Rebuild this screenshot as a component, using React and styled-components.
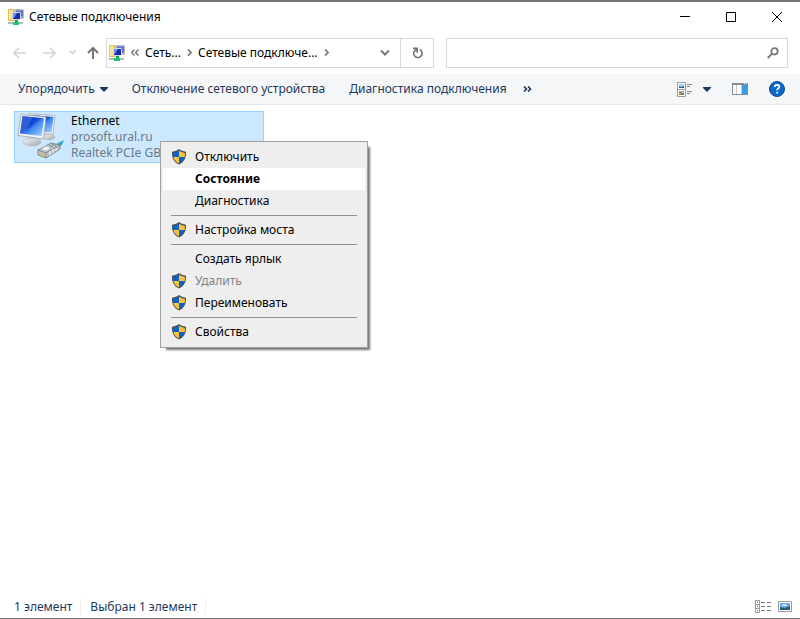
// src/App.jsx

import React, { useState } from 'react';
import styled, { createGlobalStyle } from 'styled-components';

const GlobalStyle = createGlobalStyle`
  * {
    box-sizing: border-box;
  }

  body {
    margin: 0;
    background: #fff;
    color: #000;
    font-family: 'Noto Sans', 'Open Sans', sans-serif;
    font-size: 12px;
    line-height: 16px;
  }

  button,
  input {
    font: inherit;
    color: inherit;
  }

  svg {
    display: block;
    flex: none;
  }
`;

const Window = styled.div`
  display: flex;
  flex-direction: column;
  min-height: 100vh;
  border-top: 2px solid #747474;
  border-bottom: 1px solid #747474;
`;

const PlainButton = styled.button`
  display: flex;
  align-items: center;
  justify-content: center;
  flex: none;
  padding: 0;
  border: none;
  background: none;
  white-space: nowrap;
`;

// Title bar
const TitleBar = styled.header`
  display: flex;
  align-items: center;
  height: 29px;
  padding-left: 8px;
`;

const Title = styled.h1`
  flex: 1;
  margin: 0 0 0 5px;
  font-size: 12px;
  font-weight: normal;
`;

const WindowButton = styled(PlainButton)`
  width: 46px;
  height: 28px;

  &:hover {
    background: #e5e5e5;
  }
`;

// Navigation row
const NavRow = styled.nav`
  display: flex;
  align-items: center;
  height: 43px;
  padding: 0 12px 0 13px;
`;

const History = styled.div`
  display: flex;
  align-items: center;
  flex: none;
  width: 93px;
`;

const HistoryButton = styled(PlainButton)`
  width: ${(props) => props.$width}px;
  height: 24px;
  justify-content: flex-start;
`;

const AddressBox = styled.div`
  display: flex;
  flex: 0 1 328px;
  height: 30px;
  margin-right: 12px;
  border: 1px solid #d9d9d9;
`;

const Crumbs = styled.div`
  display: flex;
  align-items: center;
  flex: 1;
  gap: 6px;
  padding: 0 10px 0 2px;
`;

const Crumb = styled(PlainButton)``;

const CrumbsToggle = styled(PlainButton)`
  margin-left: auto;
`;

const RefreshButton = styled(PlainButton)`
  width: 33px;
  border-left: 1px solid #d9d9d9;
`;

const SearchBox = styled.label`
  display: flex;
  align-items: center;
  flex: 1;
  height: 30px;
  padding-right: 8px;
  border: 1px solid #d9d9d9;
`;

const SearchInput = styled.input`
  flex: 1;
  min-width: 0;
  height: 100%;
  padding: 0 8px;
  border: none;
  outline: none;
  background: transparent;
`;

// Command bar
const CommandBar = styled.div`
  display: flex;
  align-items: center;
  height: 31px;
  padding: 0 15px 0 18px;
  background: #f5f6f7;
  border-bottom: 1px solid #e4e6e9;
  color: #1e395b;
`;

const Commands = styled.div`
  display: flex;
  align-items: center;
  flex: 1;
  gap: 24px;
`;

const CommandButton = styled(PlainButton)`
  gap: 5px;
`;

const MoreButton = styled(PlainButton)`
  margin-left: -8px;
`;

const ViewTools = styled.div`
  display: flex;
  align-items: center;
  gap: 21px;
`;

const ViewButton = styled(PlainButton)`
  gap: 11px;
`;

// Connections
const Content = styled.main`
  flex: 1;
  padding: 6px 14px;
`;

const Connection = styled.div`
  position: relative;
  display: flex;
  width: 250px;
  height: 52px;
  padding: 1px 2px;
  gap: 6px;
  background: #cce8ff;
  border: 1px solid #99d1ff;
`;

const ConnectionInfo = styled.div`
  flex: 1;
  min-width: 0;
`;

const ConnectionLine = styled.div`
  overflow: hidden;
  color: ${(props) => (props.$muted ? '#6d7a85' : '#000')};
  white-space: nowrap;
`;

const Menu = styled.div`
  position: absolute;
  top: 29px;
  left: 145px;
  width: 208px;
  padding: 4px 2px;
  background: #eee;
  border: 1px solid #a0a0a0;
  box-shadow: 4px 4px 2px -2px rgba(0, 0, 0, 0.55);
`;

const MenuItem = styled.button`
  display: grid;
  grid-template-columns: 16px 1fr;
  align-items: center;
  gap: 8px;
  width: 100%;
  height: 22px;
  padding: 0 8px;
  border: none;
  background: ${(props) => (props.$active ? '#fff' : 'transparent')};
  font-weight: ${(props) => (props.$default ? 'bold' : 'normal')};
  text-align: left;

  &:disabled {
    color: #838383;
  }
`;

const MenuLabel = styled.span`
  grid-column: 2;
`;

const Separator = styled.hr`
  height: 1px;
  margin: 3px 8px;
  border: none;
  background: #919191;
`;

// Status bar
const StatusBar = styled.footer`
  display: flex;
  align-items: center;
  height: 23px;
  padding: 0 8px 0 14px;
  color: #1e395b;
`;

const StatusText = styled.span`
  padding-right: 8px;
  margin-right: 9px;
  border-right: 1px solid #f0f0f0;
`;

const StatusViews = styled.div`
  display: flex;
  gap: 6px;
  margin-left: auto;
`;

const FolderIcon = () => (
  <svg width="16" height="16" viewBox="0 0 16 16">
    <path d="M0.5 0.5h5v2h1v9h-6z" fill="#f8e08a" stroke="#dfbd55" />
    <path d="M1.5 2v8" stroke="#fff3b8" />
    <path d="M6 1l1-1h8l1 1v8l-1 1H6z" fill="#b9bac0" />
    <path d="M8 1.5h7v6H8z" fill="#5b70cf" />
    <path d="M4 4l1-1h7l1 1v6l-1 1H5l-1-1z" fill="#d4d8e6" />
    <rect x="5" y="4" width="7" height="6" fill="#1828b4" />
    <path d="M5 4h4L6 9H5z" fill="#6c8cf0" />
    <rect x="7" y="11" width="3" height="2" fill="#11a55c" />
    <path d="M5 13h6v3H5z" fill="#19c774" />
    <path d="M0 13h5v2H0zM11 13h4v2h-4z" fill="#b4bab9" />
  </svg>
);

const ComputersIcon = () => (
  <svg width="48" height="48" viewBox="0 0 48 48">
    <defs>
      <linearGradient id="screen" x1="0" y1="0" x2="1" y2="1">
        <stop offset="0" stopColor="#0a3cc4" />
        <stop offset="0.45" stopColor="#0d48d6" />
        <stop offset="0.55" stopColor="#3f83f0" />
        <stop offset="1" stopColor="#a2dbff" />
      </linearGradient>
      <linearGradient id="stand" x1="0" y1="0" x2="1" y2="1">
        <stop offset="0" stopColor="#f7f8f9" />
        <stop offset="1" stopColor="#9ca5ad" />
      </linearGradient>
    </defs>
    <ellipse cx="32" cy="24" rx="6" ry="3" fill="url(#stand)" stroke="#b2b9bf" strokeWidth="0.6" />
    <path d="M12 0.5l26 2-2 19-22-2z" fill="#eef0f2" stroke="#a5adb3" strokeWidth="0.8" />
    <path d="M14 2l22.5 2-2 15.5-20-2z" fill="url(#screen)" />
    <path d="M11 23l7 1 2 6-9-1z" fill="#c4cacf" />
    <ellipse cx="15" cy="29" rx="9" ry="4" fill="url(#stand)" stroke="#b2b9bf" strokeWidth="0.6" />
    <path d="M4 1.5l25 2.5-2.5 22L1 22.5z" fill="#f3f4f6" stroke="#9ba4ab" strokeWidth="0.8" />
    <path d="M5.5 3l21.5 2.3-2.3 17.7L3 20.5z" fill="url(#screen)" />
    <path d="M5.5 3l10 1-8 17L3 20.5z" fill="#fff" opacity="0.14" />
    <path d="M39 31l8-4-2 5-5 3z" fill="#36a6cf" />
    <path d="M21 37l13-7 9 2v4l-14 9-8-3z" fill="#bcc4ca" stroke="#707b83" strokeWidth="0.8" />
    <path d="M21 37l8 3 14-8M29 40v5" stroke="#707b83" strokeWidth="0.8" fill="none" />
    <path d="M24 36l5 2 5-3-5-2z" fill="#f6f8f8" stroke="#a3abb1" strokeWidth="0.5" />
    <path d="M23 39v3M25 40v3M27 41v3" stroke="#d1bd55" />
    <path d="M33 38v4M36 36v4M39 35v3" stroke="#fff" />
    <path d="M32 32l4 2M35 31l4 2" stroke="#6f7a82" strokeWidth="0.8" />
  </svg>
);

const ShieldIcon = () => (
  <svg width="16" height="16" viewBox="0 0 16 16">
    <path d="M8 0C10 1.5 12 2.4 15 2.7c0.4 5.8-1.5 10-7 12.9C2.5 12.7 0.6 8.5 1 2.7 4 2.4 6 1.5 8 0z" fill="#4a5057" />
    <path d="M8 1.6V8H2.3C2 6.8 2 5.3 2.1 4 4.5 3.7 6.3 2.9 8 1.6z" fill="#0a63c9" />
    <path d="M8 1.6V8h5.7c0.3-1.2 0.3-2.7 0.2-4C11.5 3.7 9.7 2.9 8 1.6z" fill="#ffc13b" />
    <path d="M2.3 8H8v6.4C5.1 12.9 3 10.9 2.3 8z" fill="#ffc13b" />
    <path d="M13.7 8H8v6.4c2.9-1.5 5-3.5 5.7-6.4z" fill="#0a63c9" />
  </svg>
);

const Arrow = ({ flip }) => (
  <svg width="13" height="12" viewBox="0 0 13 12" fill="none" stroke="#d4d4d4" strokeWidth="1.6">
    <path d={flip ? 'M0 6h12M7 1l5 5-5 5' : 'M13 6H1M6 1L1 6l5 5'} />
  </svg>
);

const UpIcon = () => (
  <svg width="12" height="14" viewBox="0 0 12 14" fill="none" stroke="#747474" strokeWidth="2">
    <path d="M6 13V2M1 7l5-5 5 5" />
  </svg>
);

const SmallChevron = () => (
  <svg width="7" height="5" viewBox="0 0 7 5" fill="none" stroke="#cfcfcf" strokeWidth="1.5">
    <path d="M0.5 0.5l3 3 3-3" />
  </svg>
);

const CrumbChevron = () => (
  <svg width="5" height="7" viewBox="0 0 5 7" fill="none" stroke="#777" strokeWidth="1.7">
    <path d="M1 0.5l3 3-3 3" />
  </svg>
);

const Caret = () => (
  <svg width="8" height="5" viewBox="0 0 8 5" fill="#1e395b">
    <path d="M0 0h8v1L4 5 0 1z" />
  </svg>
);

const ViewIcon = () => (
  <svg width="15" height="15" viewBox="0 0 15 15">
    <path d="M0.5 0.5h8v7h-8zM0.5 7.5h8v7h-8z" fill="#fff" stroke="#9a9a9a" />
    <path d="M2 2h5v4H2z" fill="#a8d7f5" />
    <path d="M2 4l2 1 3-1v2H2z" fill="#28609b" />
    <path d="M2 9h5v4H2z" fill="#80b4df" />
    <path d="M2 10h2v3H2z" fill="#e0772f" />
    <path d="M4 11h3v2H4z" fill="#4d9650" />
    <path d="M10 2.5h5M10 4.5h3M10 9.5h5M10 11.5h3" stroke="#828282" />
  </svg>
);

const PaneIcon = () => (
  <svg width="16" height="12" viewBox="0 0 16 12">
    <path d="M0.5 0.5h15v11H0.5z" fill="#fff" stroke="#858b92" />
    <path d="M0 0h16v2H0z" fill="#858b92" />
    <path d="M12 0.5h1M14 0.5h1" stroke="#e7e9ec" />
    <path d="M4.5 2v9" stroke="#c7cbd0" />
    <path d="M9 2h6v9H9z" fill="#3c9be6" />
    <path d="M9 2h1v9H9z" fill="#a5d5f7" />
  </svg>
);

const HelpIcon = () => (
  <svg width="16" height="16" viewBox="0 0 16 16">
    <circle cx="8" cy="8" r="7.5" fill="#0868ce" stroke="#17477f" />
    <path d="M5.7 6C5.7 4.5 6.7 3.8 8 3.8s2.3 0.7 2.3 1.9c0 1.6-2.1 1.6-2.1 3.5M8.2 10.8v1.8" stroke="#fff" strokeWidth="1.8" fill="none" />
  </svg>
);

const DetailsIcon = () => (
  <svg width="17" height="13" viewBox="0 0 17 13">
    <path d="M0.5 0.5h4v4h-4zM0.5 4.5h4v4h-4zM0.5 8.5h4v4h-4z" fill="#fff" stroke="#999" />
    <path d="M2 2.5h1" stroke="#3f8b84" />
    <path d="M2 6.5h1" stroke="#4169c0" />
    <path d="M2 10.5h1" stroke="#b33d4d" />
    <path d="M6 2.5h4M12 2.5h4M6 6.5h4M12 6.5h4M6 10.5h4M12 10.5h4" stroke="#777" />
  </svg>
);

const PictureIcon = () => (
  <svg width="14" height="12" viewBox="0 0 14 12">
    <path d="M0.5 0.5h13v10h-13z" fill="#fff" stroke="#999" />
    <path d="M2 2h10v7H2z" fill="#67a8ea" />
    <path d="M3 4l4-1 3 2H5z" fill="#d6efff" />
    <path d="M2 6l5 1 5-2v4H2z" fill="#245c70" />
  </svg>
);

const menuItems = [
  { id: 'disable', label: 'Отключить', shield: true },
  { id: 'status', label: 'Состояние', isDefault: true },
  { id: 'diagnose', label: 'Диагностика' },
  { id: 'sep1', separator: true },
  { id: 'bridge', label: 'Настройка моста', shield: true },
  { id: 'sep2', separator: true },
  { id: 'shortcut', label: 'Создать ярлык' },
  { id: 'delete', label: 'Удалить', shield: true, disabled: true },
  { id: 'rename', label: 'Переименовать', shield: true },
  { id: 'sep3', separator: true },
  { id: 'properties', label: 'Свойства', shield: true },
];

const ContextMenu = () => {
  const [active, setActive] = useState('status');

  return (
    <Menu role="menu">
      {menuItems.map((item) =>
        item.separator ? (
          <Separator key={item.id} />
        ) : (
          <MenuItem
            key={item.id}
            role="menuitem"
            disabled={item.disabled}
            $active={active === item.id}
            $default={item.isDefault}
            onMouseEnter={() => setActive(item.id)}
          >
            {item.shield && <ShieldIcon />}
            <MenuLabel>{item.label}</MenuLabel>
          </MenuItem>
        )
      )}
    </Menu>
  );
};

const App = () => {
  const [search, setSearch] = useState('');

  return (
    <Window>
      <GlobalStyle />

      <TitleBar>
        <FolderIcon />
        <Title>Сетевые подключения</Title>
        <WindowButton aria-label="Свернуть">
          <svg width="10" height="10" stroke="#000">
            <path d="M0 4.5h10" />
          </svg>
        </WindowButton>
        <WindowButton aria-label="Развернуть">
          <svg width="10" height="10" stroke="#000" fill="none">
            <path d="M0.5 0.5h9v9h-9z" />
          </svg>
        </WindowButton>
        <WindowButton aria-label="Закрыть">
          <svg width="10" height="10" stroke="#000">
            <path d="M0 0l10 10M10 0L0 10" />
          </svg>
        </WindowButton>
      </TitleBar>

      <NavRow>
        <History>
          <HistoryButton $width={30} aria-label="Назад">
            <Arrow />
          </HistoryButton>
          <HistoryButton $width={26} aria-label="Вперед">
            <Arrow flip />
          </HistoryButton>
          <HistoryButton $width={18} aria-label="Журнал">
            <SmallChevron />
          </HistoryButton>
          <HistoryButton $width={19} aria-label="Вверх">
            <UpIcon />
          </HistoryButton>
        </History>
        <AddressBox>
          <Crumbs>
            <FolderIcon />
            <svg width="8" height="7" viewBox="0 0 8 7" fill="none" stroke="#666" strokeWidth="1.2">
              <path d="M3.5 0.5l-3 3 3 3M7.5 0.5l-3 3 3 3" />
            </svg>
            <Crumb>Сеть...</Crumb>
            <CrumbChevron />
            <Crumb>Сетевые подключе...</Crumb>
            <CrumbChevron />
            <CrumbsToggle aria-label="Предыдущие расположения">
              <svg width="10" height="6" viewBox="0 0 10 6" fill="none" stroke="#777" strokeWidth="2">
                <path d="M1 0.5l4 4 4-4" />
              </svg>
            </CrumbsToggle>
          </Crumbs>
          <RefreshButton aria-label="Обновить">
            <svg width="11" height="12" viewBox="0 0 11 12" fill="none" stroke="#777" strokeWidth="1.7">
              <path d="M7.8 2.6A4.2 4.2 0 1 1 2 4.8M1 1.4h4.2v4.4M5.2 1.4L2 4.8" />
            </svg>
          </RefreshButton>
        </AddressBox>
        <SearchBox>
          <SearchInput
            aria-label="Поиск"
            value={search}
            onChange={(e) => setSearch(e.target.value)}
          />
          <svg width="12" height="12" viewBox="0 0 12 12" fill="none" stroke="#777" strokeWidth="1.8">
            <circle cx="7.5" cy="4.3" r="3.2" />
            <path d="M5.2 6.6L0.7 11" />
          </svg>
        </SearchBox>
      </NavRow>

      <CommandBar>
        <Commands>
          <CommandButton>
            Упорядочить
            <Caret />
          </CommandButton>
          <CommandButton>Отключение сетевого устройства</CommandButton>
          <CommandButton>Диагностика подключения</CommandButton>
          <MoreButton aria-label="Другие команды">
            <svg width="9" height="6" viewBox="0 0 9 6" fill="none" stroke="#1e395b" strokeWidth="1.6">
              <path d="M1 0.5L3.5 3 1 5.5M5 0.5L7.5 3 5 5.5" />
            </svg>
          </MoreButton>
        </Commands>
        <ViewTools>
          <ViewButton aria-label="Вид">
            <ViewIcon />
            <Caret />
          </ViewButton>
          <PlainButton aria-label="Область просмотра">
            <PaneIcon />
          </PlainButton>
          <PlainButton aria-label="Справка">
            <HelpIcon />
          </PlainButton>
        </ViewTools>
      </CommandBar>

      <Content>
        <Connection>
          <ComputersIcon />
          <ConnectionInfo>
            <ConnectionLine>Ethernet</ConnectionLine>
            <ConnectionLine $muted>prosoft.ural.ru</ConnectionLine>
            <ConnectionLine $muted>Realtek PCIe GBE</ConnectionLine>
          </ConnectionInfo>
          <ContextMenu />
        </Connection>
      </Content>

      <StatusBar>
        <StatusText>1 элемент</StatusText>
        <StatusText>Выбран 1 элемент</StatusText>
        <StatusViews>
          <PlainButton aria-label="Таблица">
            <DetailsIcon />
          </PlainButton>
          <PlainButton aria-label="Крупные значки">
            <PictureIcon />
          </PlainButton>
        </StatusViews>
      </StatusBar>
    </Window>
  );
};

export default App;
